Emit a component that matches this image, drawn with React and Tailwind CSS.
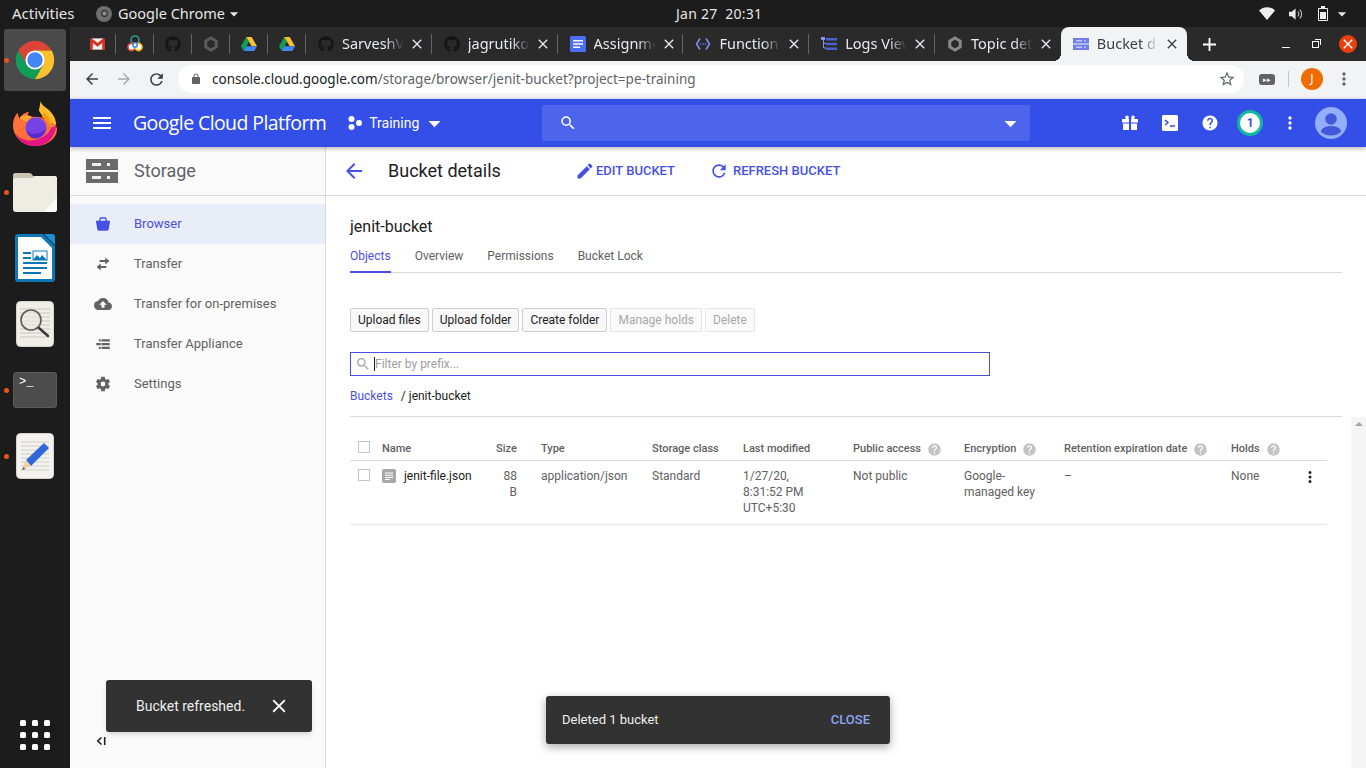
import React from 'react';
import { FaGithub } from 'react-icons/fa';

const paths = {
  menu: 'M3 18h18v-2H3v2zm0-5h18v-2H3v2zm0-7v2h18V6H3z',
  search: 'M15.5 14h-.79l-.28-.27A6.471 6.471 0 0 0 16 9.5 6.5 6.5 0 1 0 9.5 16c1.61 0 3.09-.59 4.23-1.57l.27.28v.79l5 4.99L20.49 19l-4.99-5zm-6 0C7.01 14 5 11.99 5 9.5S7.01 5 9.5 5 14 7.01 14 9.5 11.99 14 9.5 14z',
  edit: 'M3 17.25V21h3.75L17.81 9.94l-3.75-3.75L3 17.25zM20.71 7.04a1 1 0 0 0 0-1.41l-2.34-2.34a1 1 0 0 0-1.41 0l-1.83 1.83 3.75 3.75 1.83-1.83z',
  refresh: 'M17.65 6.35A7.958 7.958 0 0 0 12 4c-4.42 0-7.99 3.58-7.99 8s3.57 8 7.99 8c3.73 0 6.84-2.55 7.73-6h-2.08A5.99 5.99 0 0 1 12 18c-3.31 0-6-2.69-6-6s2.69-6 6-6c1.66 0 3.14.69 4.22 1.78L13 11h7V4l-2.35 2.35z',
  back: 'M20 11H7.83l5.59-5.59L12 4l-8 8 8 8 1.41-1.41L7.83 13H20v-2z',
  forward: 'M4 11h12.17l-5.59-5.59L12 4l8 8-8 8-1.41-1.41L16.17 13H4v-2z',
  swap: 'M20.5 8L15 3.2V6.6H7.5v2.8H15v3.4zM3.5 16L9 11.2v3.4h7.5v2.8H9v3.4z',
  cloud: 'M19.35 10.04A7.49 7.49 0 0 0 12 4C9.11 4 6.6 5.64 5.35 8.04A5.994 5.994 0 0 0 0 14c0 3.31 2.69 6 6 6h13c2.76 0 5-2.24 5-5 0-2.64-2.05-4.78-4.65-4.96zM14 13v4h-4v-4H7l5-5 5 5h-3z',
  gear: 'M19.14 12.94c.04-.3.06-.61.06-.94 0-.32-.02-.64-.07-.94l2.03-1.58a.49.49 0 0 0 .12-.61l-1.92-3.32a.488.488 0 0 0-.59-.22l-2.39.96c-.5-.38-1.03-.7-1.62-.94l-.36-2.54a.484.484 0 0 0-.48-.41h-3.84c-.24 0-.43.17-.47.41l-.36 2.54c-.59.24-1.13.57-1.62.94l-2.39-.96c-.22-.08-.47 0-.59.22L2.74 8.87c-.12.21-.08.47.12.61l2.03 1.58c-.05.3-.09.63-.09.94s.02.64.07.94l-2.03 1.58a.49.49 0 0 0-.12.61l1.92 3.32c.12.22.37.29.59.22l2.39-.96c.5.38 1.03.7 1.62.94l.36 2.54c.05.24.24.41.48.41h3.84c.24 0 .44-.17.47-.41l.36-2.54c.59-.24 1.13-.56 1.62-.94l2.39.96c.22.08.47 0 .59-.22l1.92-3.32c.12-.22.07-.47-.12-.61l-2.01-1.58zM12 15.2A3.2 3.2 0 1 1 12 8.8a3.2 3.2 0 0 1 0 6.4z',
  help: 'M12 2C6.48 2 2 6.48 2 12s4.48 10 10 10 10-4.48 10-10S17.52 2 12 2zm1 17h-2v-2h2v2zm2.07-7.75l-.9.92C13.45 12.9 13 13.5 13 15h-2v-.5c0-1.1.45-2.1 1.17-2.83l1.24-1.26c.37-.36.59-.86.59-1.41 0-1.1-.9-2-2-2s-2 .9-2 2H8c0-2.21 1.79-4 4-4s4 1.79 4 4c0 .88-.36 1.68-.93 2.25z',
  star: 'M22 9.24l-7.19-.62L12 2 9.19 8.63 2 9.24l5.46 4.73L5.82 21 12 17.27 18.18 21l-1.63-7.03L22 9.24zM12 15.4l-3.76 2.27 1-4.28-3.32-2.88 4.38-.38L12 6.1l1.71 4.04 4.38.38-3.32 2.88 1 4.28L12 15.4z',
  lock: 'M18 8h-1V6c0-2.76-2.24-5-5-5S7 3.24 7 6v2H6c-1.1 0-2 .9-2 2v10c0 1.1.9 2 2 2h12c1.1 0 2-.9 2-2V10c0-1.1-.9-2-2-2zM9 6c0-1.66 1.34-3 3-3s3 1.34 3 3v2H9V6z',
  kebab: 'M12 8a2 2 0 1 0 0-4 2 2 0 0 0 0 4zm0 2a2 2 0 1 0 0 4 2 2 0 0 0 0-4zm0 6a2 2 0 1 0 0 4 2 2 0 0 0 0-4z',
  close: 'M19 6.41L17.59 5 12 10.59 6.41 5 5 6.41 10.59 12 5 17.59 6.41 19 12 13.41 17.59 19 19 17.59 13.41 12z',
  bucket: 'M8 3h8l1.5 4.5H21.5L19.6 19a2.5 2.5 0 0 1-2.5 2H6.9a2.5 2.5 0 0 1-2.5-2L2.5 7.5H6.5zM9 5l-.5 2.5h7L15 5z',
  appliance: 'M10 5.5h11v3H10zm0 5h11v3H10zm0 5h11v3H10zM6.5 5.5h2.5v3H6.5zM3 10.5h6v3H3zm3.5 5h2.5v3H6.5z',
  caret: 'M7 10l5 5 5-5z',
};

const Icon = ({ name, className }) => (
  <svg viewBox="0 0 24 24" fill="currentColor" fillRule="evenodd" className={className}>
    <path d={paths[name]} />
  </svg>
);

const ChromeLogo = ({ className }) => (
  <svg viewBox="0 0 48 48" className={className}>
    <path fill="#db4437" d="M6.68 14A20 20 0 0 1 41.32 14H24L15.34 29z" />
    <path fill="#0f9d58" d="M6.68 14A20 20 0 0 0 24 44L32.66 29H15.34z" />
    <path fill="#fbc02d" d="M41.32 14A20 20 0 0 1 24 44L32.66 29 24 14z" />
    <circle cx="24" cy="24" r="10" fill="#fff" />
    <circle cx="24" cy="24" r="8" fill="#4285f4" />
  </svg>
);

const GreyChrome = () => (
  <svg viewBox="0 0 16 16" className="w-4 h-4">
    <circle cx="8" cy="8" r="8" fill="#6e6e6e" />
    <circle cx="8.5" cy="7.5" r="3.4" fill="#2c2c2c" />
    <circle cx="8.5" cy="7.5" r="2.2" fill="#8a8a8a" />
  </svg>
);

const Firefox = () => (
  <svg viewBox="0 0 48 48" className="w-[46px] h-[46px] -mt-1">
    <path fill="#ffbd2e" d="M30 0c1 5 5 6 9 10 4 4 7 9 7 15L36 22 28 10z" />
    <path fill="#ff7139" d="M24 47C11 47 1 37 1 25c0-5 2-10 5-13 0 3 1 5 2 6 2-4 6-6 10-7-2 3-2 5-1 6 5-1 11-1 15 1 6 3 10 4 14 8 0 1 1 2 1 3 0 10-10 18-23 18z" />
    <path fill="#e31587" d="M24 47C14 47 6 41 3 33c4 6 12 9 19 8 8-1 16-6 19-13l5-2c-1 12-10 21-22 21z" />
    <path fill="#ffa436" d="M8 17c4-3 10-3 14 0-3 0-5 2-5 4-4 1-7-1-9-4z" />
    <circle cx="25" cy="28" r="11" fill="#7542e5" />
    <path fill="#592acb" d="M15 30c3 5 13 7 20-1-1 6-6 10-11 10-5 0-8-4-9-9z" />
    <path fill="#ff980e" d="M33 12c6 4 9 10 8 17-2-5-5-10-10-12z" />
  </svg>
);

const Folder = () => (
  <svg viewBox="0 0 46 42" className="w-[46px] h-[42px]">
    <path fill="#c9c3b2" d="M3 2h14c2 0 3 1 4 3h21c2 0 3 1 3 3v6H1V4c0-1 1-2 2-2z" />
    <path fill="#efece3" d="M1 9c0-1 1-2 2-2h16c2 0 3-1 4-2h20c1 0 2 1 2 2v31c0 2-1 3-3 3H4c-2 0-3-1-3-3z" />
    <path fill="#fbfaf6" d="M45 26v12c0 2-1 3-3 3H32z" />
  </svg>
);

const Writer = () => (
  <svg viewBox="0 0 40 48" className="w-10 h-12">
    <path fill="#0f76b8" d="M3 0h25l12 12v33a3 3 0 0 1-3 3H3a3 3 0 0 1-3-3V3a3 3 0 0 1 3-3z" />
    <path fill="#fff" d="M3 3h23l11 11v31H3z" />
    <path fill="#1a8ed1" d="M29 0h8a3 3 0 0 1 3 3v8z" />
    <path fill="#0f76b8" d="M8 18h8v2H8zm0 5h8v2H8zm0 5h24v2H8zm0 5h24v2H8zm0 5h18v2H8z" />
    <rect x="18" y="17" width="14" height="9" fill="#fff" stroke="#0f76b8" />
    <path fill="#0f76b8" d="M18 26l4-5 3 3 2-3 5 5z" />
  </svg>
);

const LogViewer = () => (
  <svg viewBox="0 0 38 46" className="w-[38px] h-[46px]">
    <rect width="37" height="45" x=".5" y=".5" rx="4" fill="#efeee9" stroke="#d5d4cf" />
    <path stroke="#c8c7c0" d="M4 8h30M4 12h30M4 16h30M4 20h30M4 24h30M4 28h30M4 32h30M4 36h30" />
    <circle cx="15" cy="19" r="10" fill="#e9e8e3" fillOpacity=".7" stroke="#5d5d5d" strokeWidth="1.6" />
    <path stroke="#3a3a3a" strokeWidth="2.4" strokeLinecap="round" d="M23 27l9 8" />
  </svg>
);

const TextEditor = () => (
  <svg viewBox="0 0 38 46" className="w-[38px] h-[46px]">
    <rect width="37" height="45" x=".5" y=".5" rx="4" fill="#f3f2ee" stroke="#d5d4cf" />
    <path stroke="#cfcec8" d="M5 9h28M5 13h28M5 17h28M5 21h28M5 25h28M5 29h28M5 33h28M5 37h28" />
    <path fill="#2f66d8" d="M10 27L28 10l5 5-18 18z" />
    <path fill="#f0cfa0" d="M10 27l5 6-9 4z" />
    <path fill="#555" d="M7.5 34l1.8 2-3.3 1z" />
  </svg>
);

const Gmail = () => (
  <svg viewBox="0 0 16 12" className="w-[15px] h-3">
    <path fill="#f1f1f1" d="M2 0h12v12H2z" />
    <path fill="#d93025" d="M0 1c0-.6.4-1 1-1h1l6 5 6-5h1c.6 0 1 .4 1 1v11h-3V5L8 9 3 5v7H0z" />
  </svg>
);

const Drive = () => (
  <svg viewBox="0 0 16 14" className="w-4 h-[14px]">
    <path fill="#0f9d58" d="M5.3 0L0 9.3 2.7 14l5.3-9.3z" />
    <path fill="#fbc02d" d="M5.3 0h5.4L16 9.3h-5.3z" />
    <path fill="#4285f4" d="M2.7 14L5.3 9.3H16L13.3 14z" />
  </svg>
);

const Hexagon = ({ color }) => (
  <svg viewBox="0 0 16 16" className="w-4 h-4" fill="none" stroke={color} strokeWidth="3">
    <path d="M8 2l5.2 3v6L8 14l-5.2-3V5z" />
  </svg>
);

const Colorful = () => (
  <svg viewBox="0 0 16 18" className="w-4 h-[18px]" fill="none" strokeWidth="1.6">
    <circle cx="8" cy="5" r="4" stroke="#2a9d8f" />
    <circle cx="4.5" cy="12" r="3.6" stroke="#ea4335" fill="#fff" />
    <circle cx="11.5" cy="12" r="3.6" stroke="#fbbc04" fill="#fff" />
    <circle cx="8" cy="10" r="2.2" stroke="#4285f4" fill="#fff" />
  </svg>
);

const Docs = () => (
  <svg viewBox="0 0 16 16" className="w-4 h-4">
    <rect width="16" height="16" rx="1.5" fill="#4c6ef5" />
    <path fill="#fff" d="M3 4h10v1.6H3zm0 3.2h10v1.6H3zm0 3.2h7V12H3z" />
  </svg>
);

const Functions = () => (
  <svg viewBox="0 0 16 16" className="w-4 h-4" fill="none" stroke="#8795ea" strokeWidth="1.5">
    <path d="M5 2.5L1.5 8 5 13.5M11 2.5L14.5 8 11 13.5" />
    <circle cx="5.5" cy="8" r=".9" fill="#4c5fd5" stroke="none" />
    <circle cx="8" cy="8" r=".9" fill="#4c5fd5" stroke="none" />
    <circle cx="10.5" cy="8" r=".9" fill="#4c5fd5" stroke="none" />
  </svg>
);

const Logs = () => (
  <svg viewBox="0 0 16 16" className="w-4 h-4">
    <path fill="#4c5fd5" d="M5 2h11v2.6H5zm0 4.7h11v2.6H5zm0 4.7h11V14H5z" />
    <path fill="#8795ea" d="M0 1h4v3H0zM2 4h1v8H2zM3 6.7h2v1H3zm0 4.7h2v1H3z" />
  </svg>
);

const StorageFav = () => (
  <svg viewBox="0 0 16 12" className="w-4 h-3">
    <path fill="#6f7fe8" d="M0 0h16v5.4H0zm0 6.6h16V12H0z" />
    <path fill="#c6ccf5" d="M3 2h6v1.4H3zm8 0h1.6v1.4H11zM3 8.6h6V10H3zm8 0h1.6V10H11z" />
  </svg>
);

const StorageBig = () => (
  <svg viewBox="0 0 32 24" className="w-8 h-6">
    <path fill="#6b6b6b" d="M0 0h32v11H0zm0 13h32v11H0z" />
    <path fill="#eee" d="M6 4h9v3H6zm15 0h3v3h-3zM6 17h9v3H6zm15 0h3v3h-3z" />
  </svg>
);

const DockItem = ({ dot, active, children }) => (
  <div className="relative h-[66px] flex items-center justify-center">
    {dot && <span className="absolute left-1 top-[31px] w-[5px] h-[5px] rounded-full bg-[#e95420]" />}
    <div className={`w-[62px] h-[62px] rounded-[3px] flex items-center justify-center ${active ? 'bg-[#4a4a4a]' : ''}`}>
      {children}
    </div>
  </div>
);

const Dock = () => (
  <aside className="w-[70px] shrink-0 bg-[#1c1c1c] flex flex-col">
    <DockItem dot active><ChromeLogo className="w-[46px] h-[46px]" /></DockItem>
    <DockItem><Firefox /></DockItem>
    <DockItem dot><Folder /></DockItem>
    <DockItem><Writer /></DockItem>
    <DockItem><LogViewer /></DockItem>
    <DockItem dot>
      <div className="w-11 h-9 rounded-[3px] bg-[#4c4c4c] border border-[#5a5a5a] text-white text-[12px] leading-3 pl-[5px] pt-[3px] font-['Liberation_Mono',monospace]">&gt;_</div>
    </DockItem>
    <DockItem dot><TextEditor /></DockItem>
    <div className="mt-auto mb-[18px] mx-auto grid grid-cols-3 gap-1.5">
      {Array.from({ length: 9 }).map((_, i) => (
        <span key={i} className="w-1.5 h-1.5 rounded-[1.5px] bg-white" />
      ))}
    </div>
  </aside>
);

const TopBar = () => (
  <header className="h-[27px] bg-[#1c1c1c] flex items-center text-[#e6e6e6] text-sm font-['Noto_Sans',sans-serif]">
    <span className="ml-3 w-[84px] text-[15px]">Activities</span>
    <GreyChrome />
    <span className="ml-1.5 text-[14.5px]">Google Chrome</span>
    <Icon name="caret" className="w-5 h-5 -ml-px" />
    <span className="ml-[432px] tracking-[0.25px] whitespace-pre">Jan 27  20:31</span>
    <div className="ml-auto mr-[14px] flex items-center gap-[14px]">
      <svg viewBox="0 0 16 13" className="w-4 h-[13px]"><path fill="#eee" d="M0 3.5C4.5-1 11.5-1 16 3.5L8 13z" /></svg>
      <svg viewBox="0 0 16 14" className="w-[15px] h-[14px]" fill="none"><path fill="#eee" d="M0 4.5h3L7 1v12L3 9.5H0z" /><path stroke="#bbb" strokeWidth="1.2" d="M9.5 4.5a3.5 3.5 0 0 1 0 5M11.5 2.5a6 6 0 0 1 0 9" /></svg>
      <svg viewBox="0 0 10 15" className="w-2.5 h-[15px]"><path fill="none" stroke="#eee" d="M.5 2.5h9v12h-9z" /><path fill="#eee" d="M3 0h4v2H3zM2 6h6v7H2z" /></svg>
      <Icon name="caret" className="w-5 h-5 -ml-2.5" />
    </div>
  </header>
);

const PinnedTab = ({ children }) => (
  <div className="w-[38px] h-full flex items-center justify-center relative after:absolute after:right-0 after:top-[7px] after:h-5 after:w-px after:bg-[#5f6368]">
    {children}
  </div>
);

const Tab = ({ icon, title, last }) => (
  <div className={`w-[125.8px] h-full relative flex items-center pl-3 ${last ? '' : "after:absolute after:right-0 after:top-[7px] after:h-5 after:w-px after:bg-[#5f6368]"}`}>
    <span className="w-4 flex justify-center shrink-0">{icon}</span>
    <span className="ml-2 w-[67px] pb-px overflow-hidden whitespace-nowrap text-[14.5px] text-[#e8eaed] [mask-image:linear-gradient(90deg,#000_65%,transparent_92%)]">{title}</span>
    <Icon name="close" className="w-4 h-4 text-[#e8eaed]" />
  </div>
);

const TabStrip = () => (
  <div className="h-[34px] bg-[#2b2a2b] flex items-center pl-2 font-['Noto_Sans',sans-serif]">
    <PinnedTab><Gmail /></PinnedTab>
    <PinnedTab><Colorful /></PinnedTab>
    <PinnedTab><FaGithub className="w-4 h-4 text-[#151515]" /></PinnedTab>
    <PinnedTab><Hexagon color="#5c5c5c" /></PinnedTab>
    <PinnedTab><Drive /></PinnedTab>
    <PinnedTab><Drive /></PinnedTab>
    <Tab icon={<FaGithub className="w-4 h-4 text-[#151515]" />} title="SarveshV" />
    <Tab icon={<FaGithub className="w-4 h-4 text-[#151515]" />} title="jagrutiko" />
    <Tab icon={<Docs />} title="Assignme" />
    <Tab icon={<Functions />} title="Function" />
    <Tab icon={<Logs />} title="Logs Viev" />
    <Tab icon={<Hexagon color="#8a8a8a" />} title="Topic det" last />
    <div className="w-[125.8px] h-full relative rounded-t-lg bg-[#f1f3f4] flex items-center pl-3">
      <span className="absolute -left-2 bottom-0 w-2 h-2 bg-[radial-gradient(circle_at_0_0,transparent_8px,#f1f3f4_8px)]" />
      <span className="absolute -right-2 bottom-0 w-2 h-2 bg-[radial-gradient(circle_at_100%_0,transparent_8px,#f1f3f4_8px)]" />
      <StorageFav />
      <span className="ml-2 w-[67px] pb-px overflow-hidden whitespace-nowrap text-[14.5px] text-[#3c4043] [mask-image:linear-gradient(90deg,#000_65%,transparent_92%)]">Bucket d</span>
      <Icon name="close" className="w-4 h-4 text-[#3c4043]" />
    </div>
    <svg viewBox="0 0 14 14" className="ml-4 w-[13px] h-[13px]"><path fill="#fff" d="M6 0h2v6h6v2H8v6H6V8H0V6h6z" /></svg>
    <span className="ml-[66px] w-2 h-px bg-white mt-1.5" />
    <span className="ml-[22px] w-[7px] h-[7px] border border-white relative before:absolute before:-top-[3px] before:left-0.5 before:w-[6px] before:h-[6px] before:border-t before:border-r before:border-white" />
    <span className="ml-5 w-[18px] h-[18px] rounded-full bg-[#e9400e] flex items-center justify-center">
      <Icon name="close" className="w-4 h-4 text-white" />
    </span>
  </div>
);

const Toolbar = () => (
  <div className="h-[37px] pb-px bg-[#f1f3f4] flex items-center pl-[13px] font-['Noto_Sans',sans-serif]">
    <Icon name="back" className="w-[18px] h-[18px] text-[#3c4043]" />
    <Icon name="forward" className="ml-[14px] w-[18px] h-[18px] text-[#a8aaad]" />
    <Icon name="refresh" className="ml-[14px] w-[19px] h-[19px] text-[#3c4043]" />
    <div className="ml-[12px] w-[1066px] h-[28px] rounded-full bg-white flex items-center pl-[12px] text-[13.5px]">
      <Icon name="lock" className="w-3 h-3 text-[#5f6368]" />
      <span className="ml-[10px] text-[#202124]">console.cloud.google.com</span>
      <span className="text-[#5f6368]">/storage/browser/jenit-bucket?project=pe-training</span>
      <Icon name="star" className="ml-auto mr-[8px] w-[18px] h-[18px] text-[#5f6368]" />
    </div>
    <span className="ml-[15px] w-4 h-[11px] rounded-[3px] bg-[#5f6368] flex items-center justify-center text-white text-[7px] leading-none">▸▸</span>
    <span className="ml-[13px] w-px h-4 bg-[#c4c6c9]" />
    <span className="ml-[12px] w-[22px] h-[22px] rounded-full bg-[#ef6c00] text-white text-xs flex items-center justify-center">J</span>
    <Icon name="kebab" className="ml-[11px] w-5 h-5 text-[#5f6368]" />
  </div>
);

const GcpHeader = () => (
  <div className="h-[49px] bg-[#344fe8] border-t border-[#d8dcf5] flex items-center pl-[20px] text-white font-[Roboto,sans-serif] shadow-[0_2px_4px_rgba(0,0,0,0.25)] relative z-10">
    <Icon name="menu" className="w-6 h-6" />
    <span className="ml-[19px] text-[19.5px] leading-none font-['Open_Sans',sans-serif] tracking-[-0.6px]">Google Cloud Platform</span>
    <svg viewBox="0 0 14 14" className="ml-[22px] w-[14px] h-[14px]" fill="#fff"><circle cx="3.5" cy="3" r="3" /><circle cx="3.5" cy="11" r="3" /><circle cx="11" cy="7" r="3" /></svg>
    <span className="ml-[7px] text-sm">Training</span>
    <Icon name="caret" className="ml-px w-[29px] h-[29px]" />
    <div className="ml-[93px] w-[488px] h-9 rounded-[2px] bg-[#4c65ec] flex items-center pl-[17px] pr-[5px]">
      <Icon name="search" className="w-[18px] h-[18px]" />
      <Icon name="caret" className="ml-auto w-[29px] h-[29px]" />
    </div>
    <svg viewBox="0 0 16 16" className="ml-[92px] w-4 h-4" fill="#fff">
      <path d="M0 4h7v3.4H0zm9 0h7v3.4H9zM1 8.4h6V15H1zm8 0h6V15H9z" />
      <circle cx="5" cy="2.4" r="1.8" /><circle cx="11" cy="2.4" r="1.8" />
    </svg>
    <svg viewBox="0 0 16 16" className="ml-[24px] w-4 h-4"><rect width="16" height="16" rx="1.5" fill="#fff" /><path d="M3 5l3 2.6L3 10M8 11h5" stroke="#344fe8" strokeWidth="1.5" fill="none" /></svg>
    <Icon name="help" className="ml-[23px] w-[18px] h-[18px]" />
    <span className="ml-[18px] w-[26px] h-[26px] rounded-full bg-white border-[3px] border-[#10b8a0] text-[#344fe8] text-xs font-bold flex items-center justify-center">1</span>
    <Icon name="kebab" className="ml-[17px] w-5 h-5" />
    <svg viewBox="0 0 32 32" className="ml-[15px] w-8 h-8">
      <circle cx="16" cy="16" r="16" fill="#93aefc" />
      <circle cx="16" cy="12" r="5.8" fill="#4358d8" />
      <path d="M6 25c0-4 5-6 10-6s10 2 10 6a16 16 0 0 1-20 0z" fill="#4358d8" />
    </svg>
  </div>
);

const navItems = [
  ['Browser', 'bucket'],
  ['Transfer', 'swap'],
  ['Transfer for on-premises', 'cloud'],
  ['Transfer Appliance', 'appliance'],
  ['Settings', 'gear'],
];

const Sidebar = () => (
  <nav className="w-[256px] shrink-0 bg-[#fafafa] border-r border-[#dadada] flex flex-col">
    <div className="h-[49px] shrink-0 border-b border-[#dadada] flex items-center pl-4">
      <StorageBig />
      <span className="ml-4 text-lg text-[#5f6368]">Storage</span>
    </div>
    <ul className="pt-2 text-[13px]">
      {navItems.map(([label, icon], i) => (
        <li key={label} className={`h-10 flex items-center pl-6 ${i === 0 ? 'bg-[#e8edf8] text-[#4f4fe0]' : 'text-[#616161]'}`}>
          <Icon name={icon} className={`w-[18px] h-[18px] ${i === 0 ? 'text-[#4650e6]' : 'text-[#616161]'}`} />
          <span className="ml-[22px]">{label}</span>
        </li>
      ))}
    </ul>
    <div className="mt-auto h-9 pl-[26px] pt-1">
      <svg viewBox="0 0 10 10" className="w-2.5 h-2.5" fill="none" stroke="#202124" strokeWidth="1.6">
        <path d="M5.5 1.5L1.8 5l3.7 3.5M8.7 1v8" />
      </svg>
    </div>
  </nav>
);

const PageHeader = () => (
  <div className="h-[49px] shrink-0 border-b border-[#dadada] flex items-center pl-4 text-[#4650e6]">
    <Icon name="back" className="w-6 h-6" />
    <h1 className="ml-[22px] w-[186.5px] text-lg text-[#212121]">Bucket details</h1>
    <Icon name="edit" className="w-5 h-5" />
    <span className="ml-[1.5px] text-[13px] font-medium">EDIT BUCKET</span>
    <Icon name="refresh" className="ml-[34px] w-5 h-5" />
    <span className="ml-1 text-[13px] font-medium">REFRESH BUCKET</span>
  </div>
);

const Btn = ({ children, disabled }) => (
  <button className={`h-6 px-[7px] rounded-[2px] border text-xs ${disabled ? 'border-[#e4e4e4] text-[#a8a8a8] bg-[#fafafa]' : 'border-[#cfcfcf] text-[#212121] bg-[#f8f8f8]'}`}>
    {children}
  </button>
);

const HelpDot = () => <Icon name="help" className="ml-1.5 w-[15px] h-[15px] text-[#c4c4c4]" />;

const gridCols = 'grid grid-cols-[32px_114px_45px_111px_91px_110px_111px_100px_167px_96px]';

const FileTable = () => (
  <div className="w-[977px] text-xs">
    <div className={`${gridCols} h-[44px] items-end pb-[3px] border-b border-[#dadada] text-[#616161] font-medium text-[11px]`}>
      <span className="pl-2 pb-1"><span className="block w-3 h-3 border border-[#c4c4c4]" /></span>
      <span>Name</span>
      <span>Size</span>
      <span>Type</span>
      <span>Storage class</span>
      <span>Last modified</span>
      <span className="flex items-center">Public access<HelpDot /></span>
      <span className="flex items-center">Encryption<HelpDot /></span>
      <span className="flex items-center">Retention expiration date<HelpDot /></span>
      <span className="flex items-center">Holds<HelpDot /></span>
    </div>
    <div className={`${gridCols} h-[64px] pt-[7px] border-b border-[#e6e6e6] leading-4 text-[#616161]`}>
      <span className="pl-2 pt-[1px]"><span className="block w-3 h-3 border border-[#c4c4c4]" /></span>
      <span className="flex items-start text-[#212121]">
        <svg viewBox="0 0 14 14" className="w-[14px] h-[14px] mt-px"><rect width="14" height="14" rx="2" fill="#a8a8a8" /><path fill="#fff" d="M3 3.5h8v1H3zm0 2.2h8v1H3zm0 2.2h8v1H3zm0 2.2h5v1H3z" /></svg>
        <span className="ml-2">jenit-file.json</span>
      </span>
      <span className="w-[21px] text-right">88 B</span>
      <span>application/json</span>
      <span>Standard</span>
      <span className="w-[70px]">1/27/20, 8:31:52 PM UTC+5:30</span>
      <span>Not public</span>
      <span className="w-[80px]">Google-managed key</span>
      <span>–</span>
      <span className="flex justify-between">None<Icon name="kebab" className="w-[18px] h-[18px] text-[#212121] mr-2" /></span>
    </div>
  </div>
);

const BucketPage = () => (
  <main className="flex-1 min-w-0 bg-white flex flex-col font-[Roboto,sans-serif]">
    <PageHeader />
    <div className="px-6">
      <h2 className="mt-[20px] h-[22px] text-base leading-[22px] text-[#212121]">jenit-bucket</h2>
      <div className="mt-[7px] h-[28px] border-b border-[#dadada] flex gap-6 text-xs text-[#616161]">
        <span className="h-[28px] pt-[3px] border-b-2 border-[#4650e6] text-[#4f4fe0]">Objects</span>
        <span className="pt-[3px]">Overview</span>
        <span className="pt-[3px]">Permissions</span>
        <span className="pt-[3px]">Bucket Lock</span>
      </div>
      <div className="mt-[35px] flex gap-[3px]">
        <Btn>Upload files</Btn>
        <Btn>Upload folder</Btn>
        <Btn>Create folder</Btn>
        <Btn disabled>Manage holds</Btn>
        <Btn disabled>Delete</Btn>
      </div>
      <div className="mt-5 w-[640px] h-6 border border-[#4650e6] flex items-center pl-1 text-xs text-[#9e9e9e]">
        <Icon name="search" className="w-4 h-4 text-[#a8a8a8]" />
        <span className="ml-[3px] border-l border-[#212121] leading-[14px]">Filter by prefix...</span>
      </div>
      <div className="mt-3 h-[29px] border-b border-[#dadada] flex text-xs leading-4">
        <span className="text-[#4f4fe0]">Buckets</span>
        <span className="ml-2 text-[#212121]">/ jenit-bucket</span>
      </div>
    </div>
    <div className="flex-1 flex pl-6">
      <FileTable />
      <div className="ml-auto w-[15px] bg-[#f5f5f5] flex justify-center pt-[5px]">
        <span className="w-0 h-0 border-x-[4px] border-x-transparent border-b-[4px] border-b-[#a8a8a8]" />
      </div>
    </div>
  </main>
);

const Snackbars = () => (
  <>
    <div className="absolute left-[106px] top-[680px] w-[206px] h-[52px] rounded-[3px] bg-[#323232] shadow-md flex items-center pl-[30px] text-sm text-[#eeeeee] font-[Roboto,sans-serif]">
      Bucket refreshed.
      <Icon name="close" className="ml-[23px] w-[22px] h-[22px] text-white" />
    </div>
    <div className="absolute left-[546px] top-[696px] w-[344px] h-[48px] rounded-[3px] bg-[#323232] shadow-[0_3px_10px_rgba(0,0,0,0.35)] flex items-center justify-between px-4 pr-5 text-[13px] text-[#eeeeee] font-[Roboto,sans-serif]">
      Deleted 1 bucket
      <span className="text-[13px] font-medium text-[#8fa6f0]">CLOSE</span>
    </div>
  </>
);

export default function App() {
  return (
    <div className="relative w-[1366px] h-[768px] overflow-hidden flex flex-col bg-white">
      <TopBar />
      <div className="flex-1 flex min-h-0">
        <Dock />
        <div className="flex-1 min-w-0 flex flex-col">
          <TabStrip />
          <Toolbar />
          <GcpHeader />
          <div className="flex-1 flex min-h-0 font-[Roboto,sans-serif]">
            <Sidebar />
            <BucketPage />
          </div>
        </div>
      </div>
      <Snackbars />
    </div>
  );
}
